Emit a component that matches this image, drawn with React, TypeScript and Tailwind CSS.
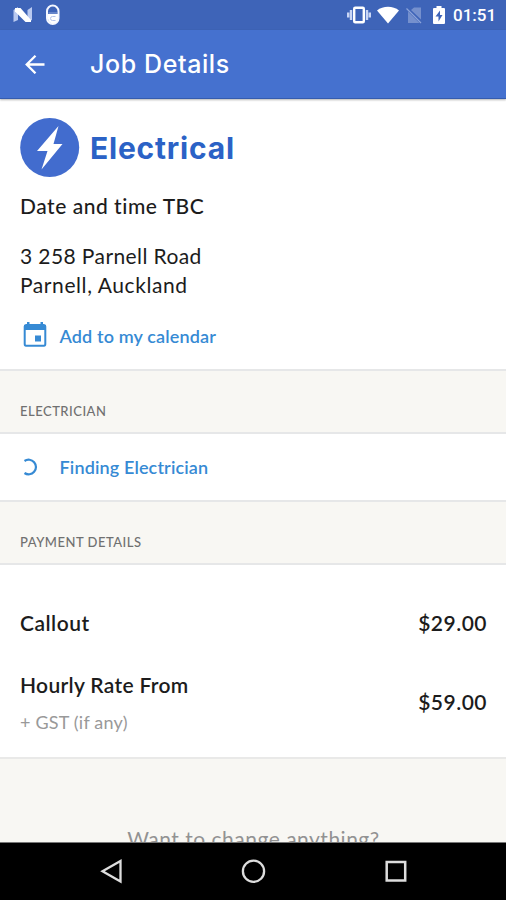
import React from "react";

function StatusBar() {
  return (
    <div className="flex h-[30px] shrink-0 items-center bg-[#3e64b8] pl-[13px] pr-[10px] text-white">
      <svg width="20" height="16" viewBox="0 0 20 16" className="shrink-0">
        <path d="M.5 3 5 0V13L.5 15ZM14.500 3 19 0V13L14.500 15Z" fill="#b9c9f0" />
        <path d="M2 1H7.500L18 13V15H12.500L2 4.500Z" fill="#fff" />
      </svg>
      <svg width="14" height="22" viewBox="0 0 14 22" className="ml-[13px] shrink-0">
        <rect x="1" y="1.500" width="11.500" height="18.500" rx="5.750" fill="#3e64b8" stroke="#f4f7ff" strokeWidth="2" />
        <path d="M2 10H12V14.500A5 5 0 0 1 2 14.500Z" fill="#fff" />
        <path d="M2.500 9H11" fill="none" stroke="#8ea6dc" />
        <path d="M9.500 12.500H6.500A2 2 0 0 0 6.500 16.500H9.500" fill="none" stroke="#b3c3ea" />
      </svg>
      <svg width="24" height="18" viewBox="0 0 24 18" className="ml-auto shrink-0">
        <path d="M1.200 6.500V11.500M4 4V14M20 4V14M22.800 6.500V11.500" stroke="#c9d6f5" strokeWidth="2.400" />
        <rect x="7.200" y="1.700" width="9.600" height="14.600" rx="1" fill="none" stroke="#fff" strokeWidth="2.400" />
      </svg>
      <svg width="22" height="18" viewBox="0 0 22 18" className="ml-[6px] shrink-0">
        <path d="M0 4.500C6-.5 16-.5 22 4.500L11 17.500Z" fill="#fff" />
      </svg>
      <svg width="16" height="17" viewBox="0 0 16 17" className="ml-[7px] shrink-0">
        <path d="M5 3 8 .5H15V12.500ZM2 4.500 13.500 16H2Z" fill="#7590cd" />
        <path d="M.5 1.500 15 16" stroke="#8ca3d9" strokeWidth="1.300" />
      </svg>
      <svg width="12" height="19" viewBox="0 0 12 19" className="ml-[11px] shrink-0">
        <path d="M3.500 0H8.500V2H11Q12 2 12 3V17Q12 18 11 18H1Q0 18 0 17V3Q0 2 1 2H3.500Z" fill="#fff" />
        <path d="M7 4.500 2.500 10.500H5.500V15.500L9.500 9H7Z" fill="#3e64b8" />
      </svg>
      <span className="ml-[8px] w-[43px] whitespace-nowrap font-['Roboto',sans-serif] text-[17px] font-medium leading-[32px]">
        01:51
      </span>
    </div>
  );
}

function AppBar() {
  return (
    <div className="z-10 flex h-[69px] shrink-0 items-center border-b border-[#355cae] bg-[#4571cf] pl-[25px] text-white shadow-[0_1px_2px_rgba(0,0,0,0.3)]">
      <svg width="20" height="20" viewBox="0 0 20 20" fill="none" stroke="#fff" strokeWidth="2.300">
        <path d="M19.500 10.500H2M10.500 1.700 1.700 10.500l8.800 8.800" />
      </svg>
      <h1 className="ml-[45px] whitespace-nowrap font-['Inter',sans-serif] text-[25px] font-medium leading-[30px] tracking-[0.6px]">
        Job Details
      </h1>
    </div>
  );
}

function SectionHeader({ children }: { children: React.ReactNode }) {
  return (
    <h3 className="flex h-[65px] shrink-0 items-end border-y-2 border-[#e6e7e8] bg-[#f8f7f3] pb-[11px] pl-[20px] text-[13px] font-medium leading-[20px] tracking-[0.5px] text-[#707070]">
      {children}
    </h3>
  );
}

export default function App() {
  return (
    <div className="flex h-[900px] w-[506px] flex-col overflow-hidden bg-white font-['Lato',sans-serif] text-[#1c1c1c]">
      <StatusBar />
      <AppBar />
      <main className="flex h-[743px] shrink-0 flex-col overflow-hidden">
        <section className="flex h-[270px] shrink-0 flex-col pl-[20px] pt-[19px]">
          <div className="flex h-[60px] items-center">
            <svg width="60" height="60" viewBox="0 0 60 60">
              <circle cx="29.700" cy="29.500" r="29.500" fill="#426cce" />
              <path d="M38.500 8 17 33H27.500L21.500 51.500 42.500 26H33.500Z" fill="#fff" />
            </svg>
            <h2 className="ml-[10px] whitespace-nowrap font-['Inter',sans-serif] text-[30px] font-bold leading-[36px] tracking-[0.8px] text-[#2b62c6]">
              Electrical
            </h2>
          </div>
          <p className="mt-[14px] whitespace-nowrap text-[21px] font-medium leading-[28px] tracking-[0.530px]">Date and time TBC</p>
          <p className="mt-[22px] whitespace-nowrap text-[21px] leading-[28.500px]">
            <span className="tracking-[0.4px]">3 258 Parnell Road</span>
            <br />
            <span className="tracking-[0.580px]">Parnell, Auckland</span>
          </p>
          <div className="mt-[24px] flex h-[26px] items-center">
            <svg width="30" height="26" viewBox="0 0 30 26" className="overflow-visible">
              <path d="M6 2H24Q25.300 2 25.300 3.500V21Q25.300 22.700 24 22.700H6Q4.700 22.700 4.700 21V3.500Q4.700 2 6 2Z" fill="none" stroke="#368ad4" strokeWidth="2" />
              <path d="M4 2H26V7H4ZM7 -1H9.500V3H7ZM20.500 -1H23V3H20.500ZM15 12.500H21V18.500H15Z" fill="#368ad4" />
            </svg>
            <span className="ml-[9.500px] whitespace-nowrap text-[18px] font-semibold leading-[26px] tracking-[0.140px] text-[#368ad4]">Add to my calendar</span>
          </div>
        </section>
        <SectionHeader>ELECTRICIAN</SectionHeader>
        <section className="flex h-[66px] shrink-0 items-center pl-[20px]">
          <svg width="20" height="18" viewBox="0 0 20 18" fill="none" stroke="#368ad4" strokeWidth="2.200">
            <path d="M4.500 3A7.300 7.300 0 1 1 4.500 15" />
          </svg>
          <span className="ml-[19.500px] whitespace-nowrap text-[18px] font-semibold leading-[26px] tracking-[0.140px] text-[#368ad4]">Finding Electrician</span>
        </section>
        <SectionHeader>PAYMENT DETAILS</SectionHeader>
        <section className="flex h-[192px] shrink-0 flex-col pl-[20px] pr-[19px] pt-[44px] text-[21px] font-semibold">
          <div className="flex h-[28px] items-center justify-between">
            <span className="tracking-[0.5px]">Callout</span>
            <span className="tracking-[0.5px]">$29.00</span>
          </div>
          <div className="mt-[34px] flex h-[68px] items-start justify-between">
            <div>
              <p className="whitespace-nowrap leading-[28px] tracking-[0.320px]">Hourly Rate From</p>
              <p className="mt-[11px] text-[18px] font-normal leading-[24px] tracking-[0.2px] text-[#999]">+ GST (if any)</p>
            </div>
            <span className="mt-[17px] leading-[28px] tracking-[0.5px]">$59.00</span>
          </div>
        </section>
        <footer className="flex grow justify-center border-t-2 border-[#e9e9e8] bg-[#f8f7f3] pl-[1px] pt-[66px]">
          <p className="whitespace-nowrap text-[21px] leading-[28px] tracking-[0.5px] text-[#929292]">Want to change anything?</p>
        </footer>
      </main>
      <nav className="flex h-[58px] shrink-0 items-center border-t border-[#777] bg-black pl-[100px]">
        <svg width="22" height="24" viewBox="0 0 22 24" className="overflow-visible" fill="none" stroke="#ddd" strokeWidth="2.300">
          <path d="M20.500 1V21.500L2.500 11.200Z" />
        </svg>
        <svg width="24" height="24" viewBox="0 0 24 24" className="ml-[119px] overflow-visible" fill="none" stroke="#ddd" strokeWidth="2.300">
          <circle cx="12.500" cy="11.200" r="10.600" />
        </svg>
        <svg width="22" height="22" viewBox="0 0 22 22" className="ml-[120px] overflow-visible" fill="none" stroke="#ddd" strokeWidth="2.500">
          <rect x="1.700" y="1" width="18.500" height="18.500" />
        </svg>
      </nav>
    </div>
  );
}
